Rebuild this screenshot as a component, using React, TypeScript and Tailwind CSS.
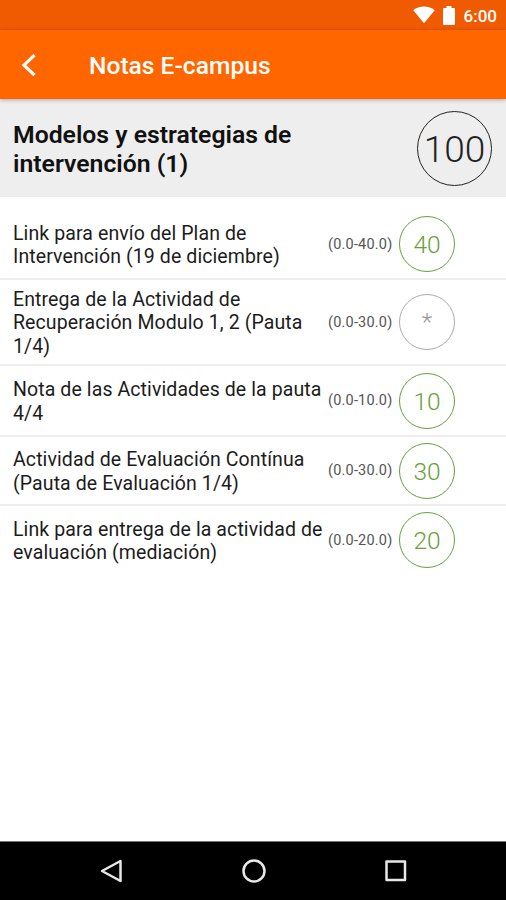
interface Grade {
    name: string[];
    range: string;
    score: string | null;
    height: string;
}

const grades: Grade[] = [
    { name: ['Link para envío del Plan de', 'Intervención (19 de diciembre)'], range: '(0.0-40.0)', score: '40', height: 'h-[70px]' },
    { name: ['Entrega de la Actividad de', 'Recuperación Modulo 1, 2 (Pauta', '1/4)'], range: '(0.0-30.0)', score: null, height: 'h-[86px]' },
    { name: ['Nota de las Actividades de la pauta', '4/4'], range: '(0.0-10.0)', score: '10', height: 'h-[71px]' },
    { name: ['Actividad de Evaluación Contínua', '(Pauta de Evaluación 1/4)'], range: '(0.0-30.0)', score: '30', height: 'h-[69px]' },
    { name: ['Link para entrega de la actividad de', 'evaluación (mediación)'], range: '(0.0-20.0)', score: '20', height: 'h-[70px]' },
];

function StatusBar() {
    return (
        <div className="h-[30px] shrink-0 bg-[#f05a00] flex items-center justify-end pr-[9px] text-white">
            <svg width="22" height="18" viewBox="0 0 22 18" fill="currentColor">
                <path d="M0.3 4.2C3.2 1.9 7 .6 11 .6s7.800 1.300 10.700 3.600L11 17.200z" />
            </svg>
            <svg width="12" height="19" viewBox="0 0 12 19" fill="currentColor" className="ml-2">
                <path d="M3.500 0h5v2H11a1 1 0 0 1 1 1v15a1 1 0 0 1-1 1H1a1 1 0 0 1-1-1V3a1 1 0 0 1 1-1h2.500z" />
            </svg>
            <span className="ml-[9px] pt-0.5 text-[17px] font-medium leading-none">6:00</span>
        </div>
    );
}

function GradeRow({ grade }: { grade: Grade }) {
    return (
        <li className={`${grade.height} flex items-center border-b-2 border-[#eeeeee] last:border-transparent pl-[13px]`}>
            <div className="w-[315px] pt-[2px] text-[19.5px] leading-[23.2px] tracking-[0.1px] text-[#1c1c1c] whitespace-nowrap">
                {grade.name.map((line) => (
                    <div key={line}>{line}</div>
                ))}
            </div>
            <span className="w-[71px] pt-px text-[14.5px] tracking-[0.2px] text-[#555555] whitespace-nowrap">{grade.range}</span>
            {grade.score ? (
                <div className="size-14 pt-[3px] rounded-full border-[1.5px] border-[#649f3f] flex items-center justify-center text-[24.5px] font-light text-[#689f38]">
                    {grade.score}
                </div>
            ) : (
                <div className="size-14 pt-px rounded-full border-[1.5px] border-[#aaaaaa] flex items-center justify-center text-[24.5px] font-light text-[#999999]">
                    *
                </div>
            )}
        </li>
    );
}

export default function App() {
    return (
        <div className="h-[900px] w-[506px] flex flex-col bg-white overflow-hidden font-[Roboto,sans-serif]">
            <StatusBar />
            <header className="h-[69px] shrink-0 z-10 bg-[#ff6600] shadow-[0_1px_4px_rgba(0,0,0,0.3)] flex items-center text-white">
                <svg width="16" height="24" viewBox="0 0 16 24" fill="none" stroke="currentColor" strokeWidth="3.200" className="ml-5">
                    <path d="M14.500 2.200L4 12.200l10.500 10" />
                </svg>
                <h1 className="ml-[53px] pt-[3px] text-[24.6px] font-medium leading-none">Notas E-campus</h1>
            </header>

            <section className="h-[98px] shrink-0 bg-[#eeeeee] flex items-center justify-between pl-[13px] pr-[14px]">
                <h2 className="pt-[3px] text-[24.75px] font-semibold leading-[28.5px] text-[#111111] whitespace-nowrap">
                    Modelos y estrategias de
                    <br />
                    intervención (1)
                </h2>
                <div className="size-[75px] pt-[4px] rounded-full border border-[#222222] flex items-center justify-center text-[37px] font-light text-[#222222]">
                    100
                </div>
            </section>

            <ul className="flex-1 pt-[13px]">
                {grades.map((grade) => (
                    <GradeRow key={grade.name[0]} grade={grade} />
                ))}
            </ul>

            <nav className="h-[59px] shrink-0 border-t border-[#777777] bg-black flex items-center justify-center gap-[118px] pl-px text-[#e8e8e8]">
                <svg width="24" height="24" viewBox="0 0 24 24" fill="none" stroke="currentColor" strokeWidth="2.500" strokeLinejoin="round">
                    <path d="M20.500 2v20L2 12z" />
                </svg>
                <svg width="24" height="24" viewBox="0 0 24 24" fill="none" stroke="currentColor" strokeWidth="2.500">
                    <circle cx="12" cy="12" r="10.500" />
                </svg>
                <svg width="24" height="24" viewBox="0 0 24 24" fill="none" stroke="currentColor" strokeWidth="2.500" strokeLinejoin="round">
                    <rect x="2.500" y="2.500" width="18.500" height="18.500" />
                </svg>
            </nav>
        </div>
    );
}
